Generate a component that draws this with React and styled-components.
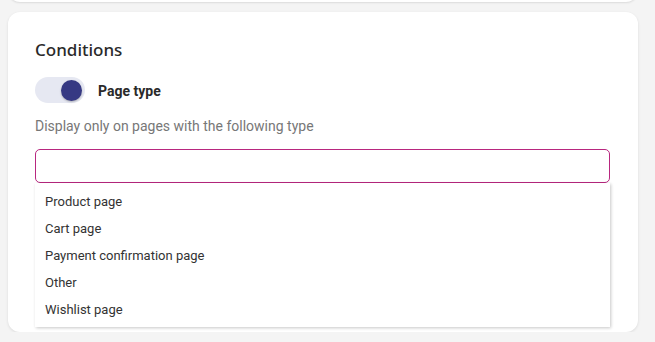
import React, { useState } from "react";
import styled, { createGlobalStyle } from "styled-components";

const options = [
  "Product page",
  "Cart page",
  "Payment confirmation page",
  "Other",
  "Wishlist page"
];

export default function App() {
  const [enabled, setEnabled] = useState(true);

  return (
    <>
      <GlobalStyle />
      <Page>
        <PrevCard />
        <Card>
          <Title>Conditions</Title>
          <ToggleRow>
            <Switch $on={enabled} onClick={() => setEnabled(!enabled)}>
              <Knob $on={enabled} />
            </Switch>
            <ToggleLabel>Page type</ToggleLabel>
          </ToggleRow>
          <Hint>Display only on pages with the following type</Hint>
          <SelectWrap>
            <Input />
            <Menu>
              {options.map((o) => (
                <Option key={o}>{o}</Option>
              ))}
            </Menu>
          </SelectWrap>
        </Card>
      </Page>
    </>
  );
}

const GlobalStyle = createGlobalStyle`
  html, body {
    margin: 0;
    padding: 0;
    background: #f4f4f4;
    font-family: Roboto, "Liberation Sans", sans-serif;
  }
`;

const Page = styled.div`
  padding: 0 17px 0 8px;
  display: flex;
  flex-direction: column;
`;

const PrevCard = styled.div`
  height: 14px;
  margin-top: -12px;
  background: #fff;
  border-radius: 0 0 12px 12px;
  box-shadow: 0 1px 2px rgba(0, 0, 0, .1);
`;

const Card = styled.div`
  margin-top: 10px;
  height: 320px;
  box-sizing: border-box;
  background: #fff;
  border-radius: 12px;
  box-shadow: 0 1px 3px rgba(0, 0, 0, .1);
  padding: 26px 28px 0 27px;
`;

const Title = styled.h2`
  margin: 0;
  font-family: "Noto Sans", sans-serif;
  font-size: 17px;
  font-weight: 500;
  line-height: 24px;
  color: #2a2a2a;
`;

const ToggleRow = styled.div`
  display: flex;
  align-items: center;
  gap: 13px;
  height: 26px;
  margin-top: 15px;
`;

const Switch = styled.div`
  width: 50px;
  height: 26px;
  border-radius: 13px;
  background: ${(p) => (p.$on ? "#e6e8f2" : "#e0e0e0")};
  display: flex;
  align-items: center;
  justify-content: ${(p) => (p.$on ? "flex-end" : "flex-start")};
  padding: 0 3px;
  box-sizing: border-box;
  cursor: pointer;
`;

const Knob = styled.div`
  width: 21px;
  height: 21px;
  border-radius: 50%;
  background: ${(p) => (p.$on ? "#363983" : "#fff")};
  box-shadow: 0 1px 2px rgba(0, 0, 0, .25);
`;

const ToggleLabel = styled.span`
  font-size: 14px;
  font-weight: 700;
  line-height: 20px;
  padding-top: 2px;
  color: #2a2a2a;
`;

const Hint = styled.p`
  margin: 13px 0 0;
  font-size: 14px;
  line-height: 20px;
  color: #777;
`;

const SelectWrap = styled.div`
  position: relative;
  margin-top: 13px;
`;

const Input = styled.input`
  display: block;
  width: 100%;
  height: 34px;
  box-sizing: border-box;
  border: 1px solid #b8277f;
  border-radius: 5px;
  outline: none;
  padding: 0 10px;
  font-size: 13px;
`;

const Menu = styled.ul`
  position: absolute;
  top: 100%;
  left: 0;
  right: 0;
  margin: 0;
  padding: 5px 0 4px;
  list-style: none;
  background: #fff;
  box-shadow: 1px 1px 3px rgba(0, 0, 0, .22);
`;

const Option = styled.li`
  height: 27px;
  line-height: 27px;
  padding: 0 10px;
  font-size: 13px;
  color: #333;
`;
